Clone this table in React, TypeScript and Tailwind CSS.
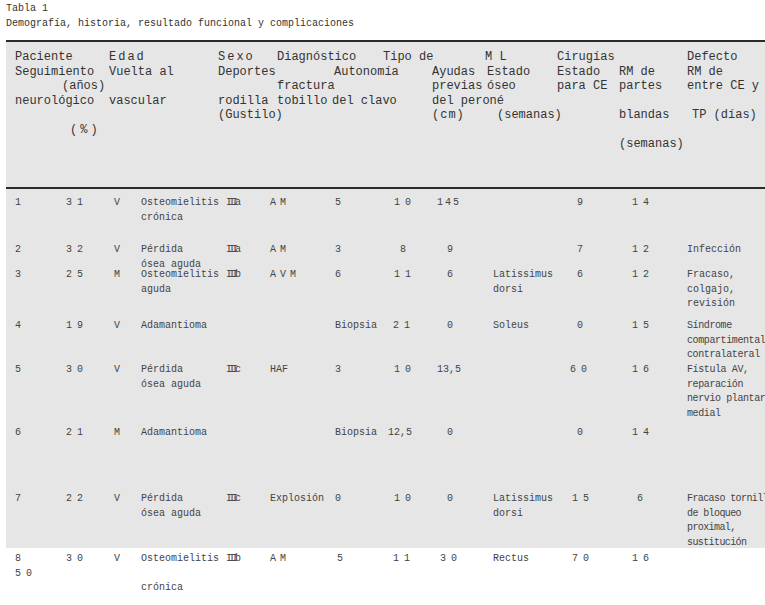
type Cell = string | string[] | { t: string | string[]; c?: string } | null;

// header: 11 tracks, starting at x=15
const headCols = 'grid grid-cols-[94px_109px_59px_55px_51px_49px_55px_70px_62px_68px_1fr]';
// body: 13 tracks, starting at x=15
const bodyCols = 'grid grid-cols-[51px_48px_27px_85px_44px_65px_53px_47px_58px_77px_62px_55px_1fr]';

const headLines: Cell[][] = [
  ['Paciente', { t: 'Edad', c: 'tracking-[2px]' }, { t: 'Sexo', c: 'tracking-[2px]' }, 'Diagnóstico', null, 'Tipo de', null, { t: 'M L', c: '-ml-[2px]' }, 'Cirugías', null, 'Defecto'],
  ['Seguimiento', 'Vuelta al', 'Deportes', null, { t: 'Autonomía', c: 'pl-[2px]' }, null, 'Ayudas', 'Estado', 'Estado', 'RM de', 'RM de'],
  [{ t: '(años)', c: 'pl-[47px]' }, null, null, 'fractura', null, null, 'previas', 'óseo', 'para CE', 'partes', 'entre CE y'],
  ['neurológico', 'vascular', 'rodilla', 'tobillo', 'del clavo', null, 'del peroné', null, null, null, null],
  [null, null, '(Gustilo)', null, null, null, { t: '(cm)', c: 'tracking-[1px]' }, { t: '(semanas)', c: 'pl-[10px]' }, null, 'blandas', { t: 'TP (días)', c: 'pl-[5px]' }],
  [{ t: '(%)', c: 'pl-[55px] tracking-[3px]' }, null, null, null, null, null, null, null, null, null, null],
  [null, null, null, null, null, null, null, null, null, '(semanas)', null],
];

const rows: { h: string; cells: Cell[] }[] = [
  {
    h: 'h-[47px]',
    cells: ['1', '31', 'V', ['Osteomielitis', 'crónica'], 'IIIa', 'AM', '5', { t: '10', c: 'pl-[6px]' }, { t: '145', c: 'pl-[2px]' }, null, { t: '9', c: 'pl-[7px]' }, '14', null],
  },
  {
    h: 'h-[25px]',
    cells: ['2', '32', 'V', ['Pérdida', 'ósea aguda'], 'IIIa', 'AM', '3', { t: '8', c: 'pl-[12px]' }, { t: '9', c: 'pl-[12px]' }, null, { t: '7', c: 'pl-[7px]' }, '12', 'Infección'],
  },
  {
    h: 'h-[51px]',
    cells: ['3', '25', 'M', ['Osteomielitis', 'aguda'], 'IIIb', 'AVM', '6', { t: '11', c: 'pl-[6px]' }, { t: '6', c: 'pl-[12px]' }, ['Latissimus', 'dorsi'], { t: '6', c: 'pl-[7px]' }, '12', ['Fracaso,', 'colgajo,', 'revisión']],
  },
  {
    h: 'h-[44px]',
    cells: ['4', '19', 'V', 'Adamantioma', null, null, 'Biopsia', { t: '21', c: 'pl-[5px]' }, { t: '0', c: 'pl-[12px]' }, 'Soleus', { t: '0', c: 'pl-[7px]' }, '15', { t: ['Síndrome', 'compartimental', 'contralateral'], c: 'tracking-[-0.4px]' }],
  },
  {
    h: 'h-[63px]',
    cells: ['5', '30', 'V', ['Pérdida', 'ósea aguda'], 'IIIc', 'HAF', '3', { t: '10', c: 'pl-[6px]' }, { t: '13,5', c: 'pl-[2px]' }, null, '60', '16', { t: ['Fístula AV,', 'reparación', 'nervio plantar', 'medial'], c: 'tracking-[-0.4px]' }],
  },
  {
    h: 'h-[66px]',
    cells: ['6', '21', 'M', 'Adamantioma', null, null, 'Biopsia', '12,5', { t: '0', c: 'pl-[12px]' }, null, { t: '0', c: 'pl-[7px]' }, '14', null],
  },
  {
    h: 'h-[56px]',
    cells: ['7', '22', 'V', ['Pérdida', 'ósea aguda'], 'IIIc', 'Explosión', '0', { t: '10', c: 'pl-[6px]' }, { t: '0', c: 'pl-[12px]' }, ['Latissimus', 'dorsi'], { t: '15', c: 'pl-[2px]' }, { t: '6', c: 'pl-[5px]' }, { t: ['Fracaso tornillo', 'de bloqueo', 'proximal,', 'sustitución'], c: 'tracking-[-0.6px]' }],
  },
];

const lastRow: Cell[] = [['8', '50'], '30', 'V', ['Osteomielitis', '', 'crónica'], 'IIIb', 'AM', { t: '5', c: 'pl-[2px]' }, { t: '11', c: 'pl-[5px]' }, { t: '30', c: 'pl-[5px]' }, 'Rectus', { t: '70', c: 'pl-[2px]' }, '16', null];

// spacing the scan shows on short tokens
function tokenClass(s: string) {
  if (/^\d{2}$/.test(s)) return 'tracking-[5px]';
  if (/^\d{3}$/.test(s)) return 'tracking-[2px]';
  if (s === 'AM' || s === 'AVM') return 'tracking-[4px]';
  if (/^III[abc]$/.test(s)) return 'tracking-[-3px]';
  return '';
}

function CellView({ cell }: { cell: Cell }) {
  if (cell === null) return <div />;
  const obj = typeof cell === 'object' && !Array.isArray(cell) ? cell : { t: cell };
  const lines = Array.isArray(obj.t) ? obj.t : [obj.t];
  return (
    <div className={obj.c ?? ''}>
      {lines.map((l, i) => (
        <div key={i} className={`h-[14.5px] whitespace-nowrap ${tokenClass(l)}`}>
          {l}
        </div>
      ))}
    </div>
  );
}

export default function App() {
  return (
    <div className="h-[605px] w-full overflow-hidden bg-white font-['Liberation_Mono',monospace]">
      <div className="pl-[6px] pt-[1px] text-[10px] leading-[15px] text-[#333]">
        <div>Tabla 1</div>
        <div>Demografía, historia, resultado funcional y complicaciones</div>
      </div>

      <div className="ml-[6px] mt-[9px] border-t-2 border-[#2a2a2a] bg-[#e6e6e6]">
        <div className="h-[147px] border-b-2 border-[#2a2a2a] pl-[9px] pt-[8px] text-[12px] leading-[14.5px] text-[#333]">
          {headLines.map((line, i) => (
            <div key={i} className={`${headCols} h-[14.5px]`}>
              {line.map((c, j) => (
                <CellView key={j} cell={c} />
              ))}
            </div>
          ))}
        </div>

        <div className="pl-[9px] pt-[7px] text-[10px] leading-[14.5px] text-[#444]">
          {rows.map((r, i) => (
            <div key={i} className={`${bodyCols} ${r.h}`}>
              {r.cells.map((c, j) => (
                <CellView key={j} cell={c} />
              ))}
            </div>
          ))}
        </div>
      </div>

      <div className="ml-[6px] pl-[9px] pt-[4px] text-[10px] leading-[14.5px] text-[#444]">
        <div className={bodyCols}>
          {lastRow.map((c, j) => (
            <CellView key={j} cell={c} />
          ))}
        </div>
      </div>
    </div>
  );
}
